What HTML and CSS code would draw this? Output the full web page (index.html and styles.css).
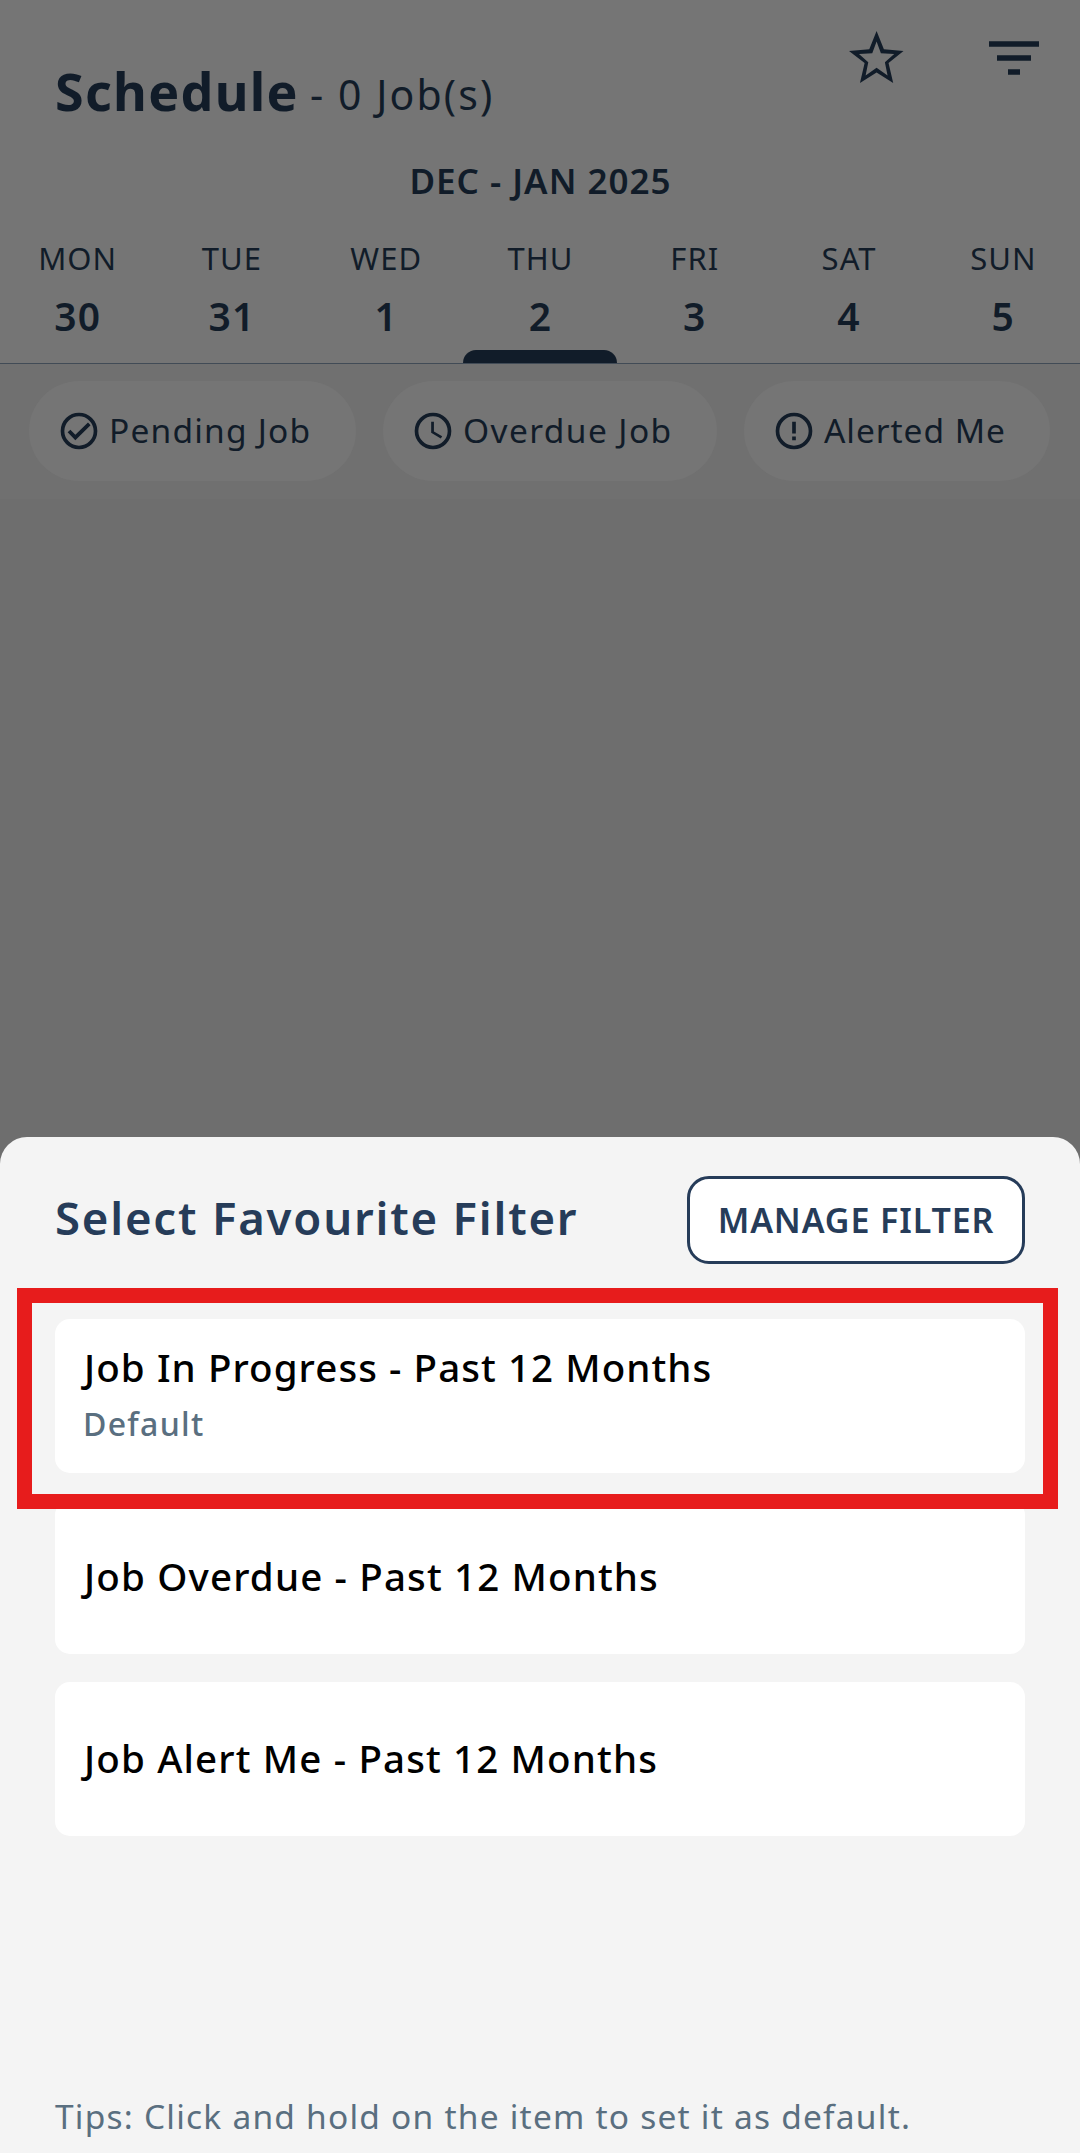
FILE: index.html
```
<!DOCTYPE html>
<html lang="en">
<head>
<meta charset="utf-8">
<title>Schedule</title>
<link rel="stylesheet" href="styles.css">
</head>
<body>
<main class="screen">
  <header class="top">
    <div class="title-row">
      <h1 class="title">Schedule</h1>
      <span class="count">- 0 Job(s)</span>
      <div class="actions">
        <svg class="star" viewBox="27 26 164 156"><path fill-rule="evenodd" d="M110 26 132 81 191 86 146 122 160 182 110 151 60 182 74 122 27 86 88 81ZM110 57 97 93 57 95 85 120 77 160 110 136 143 160 135 120 163 95 123 93Z"/></svg>
        <svg class="filter" viewBox="0 0 50 34"><path d="M0 .3h50v5.4H0zM8 14.3h34v5.4H8zM19 28.3h12v5.4H19z"/></svg>
      </div>
    </div>
    <div class="month">DEC - JAN 2025</div>
    <div class="week">
      <div class="day"><span>MON</span><b>30</b></div>
      <div class="day"><span>TUE</span><b>31</b></div>
      <div class="day"><span>WED</span><b>1</b></div>
      <div class="day selected"><span>THU</span><b>2</b></div>
      <div class="day"><span>FRI</span><b>3</b></div>
      <div class="day"><span>SAT</span><b>4</b></div>
      <div class="day"><span>SUN</span><b>5</b></div>
    </div>
  </header>
  <nav class="chips">
    <div class="chip pending"><svg viewBox="0 0 24 24"><circle cx="12" cy="12" r="9"/><path d="M16.9 7.3 10 14.1l-2.7-2.8-1.5 1.4L10 17l8.3-8.2z"/></svg><span>Pending Job</span></div>
    <div class="chip overdue"><svg viewBox="0 0 24 24"><circle cx="12" cy="12" r="9"/><path d="M12.5 7H11v6l5.25 3.15.75-1.23-4.5-2.67z"/></svg><span>Overdue Job</span></div>
    <div class="chip alerted"><svg viewBox="0 0 24 24"><circle cx="12" cy="12" r="9"/><path d="M11 7h2v6.4h-2zM11 15h2v2h-2z"/></svg><span>Alerted Me</span></div>
  </nav>
  <section class="sheet">
    <div class="sheet-head">
      <h2 class="sheet-title">Select Favourite Filter</h2>
      <button class="manage">MANAGE FILTER</button>
    </div>
    <div class="list">
      <div class="card highlighted"><span class="name">Job In Progress - Past 12 Months</span><span class="default">Default</span></div>
      <div class="card"><span class="name">Job Overdue - Past 12 Months</span></div>
      <div class="card"><span class="name">Job Alert Me - Past 12 Months</span></div>
    </div>
    <p class="tips">Tips: Click and hold on the item to set it as default.</p>
  </section>
</main>
</body>
</html>
```
FILE: styles.css
```
* { box-sizing: border-box; }
body { margin: 0; font-family: "Noto Sans", sans-serif; }
h1, h2, p { margin: 0; }

.screen {
  width: 1080px;
  height: 2153px;
  display: flex;
  flex-direction: column;
  background: #6e6e6e;
  color: #111c29;
  overflow: hidden;
  white-space: nowrap;
}

/* dimmed schedule header */
.top {
  height: 364px;
  flex: none;
  background: #757575;
  border-bottom: 1px solid #414b56;
  display: flex;
  flex-direction: column;
}
.title-row { display: flex; height: 160px; padding: 0 41px 0 55px; }
.title { margin-top: 61px; font-size: 52px; line-height: 60px; font-weight: 700; letter-spacing: 1.3px; }
.count { margin: 64px 0 0 11px; font-size: 41px; line-height: 60px; letter-spacing: 2.1px; }
.actions { display: flex; margin-left: auto; gap: 85.5px; }
.actions svg { fill: #111c29; display: block; }
.star { width: 54.5px; height: 52px; margin-top: 30.5px; }
.filter { width: 50px; height: 34px; margin-top: 41px; }
.month { height: 80px; padding: 1px 0 0 1px; text-align: center; font-size: 35px; line-height: 40px; font-weight: 600; letter-spacing: 1px; }
.week { display: grid; grid-template-columns: repeat(7, 1fr); flex: 1; }
.day { display: flex; flex-direction: column; align-items: center; }
.day span { padding-left: 1px; font-size: 31px; line-height: 37px; letter-spacing: 1px; }
.day b { margin-top: 16px; padding-left: 1px; font-size: 39px; line-height: 46px; font-weight: 600; letter-spacing: 1.2px; }
.selected::after { content: ""; width: 100%; height: 13px; margin-top: auto; background: #111c29; border-radius: 13px 13px 0 0; }

.chips { display: flex; gap: 27px; padding: 17px 29px; height: 135px; flex: none; background: #707070; }
.chip { display: flex; align-items: center; gap: 8px; height: 100px; padding-left: 28px; border-radius: 50px; background: #757575; font-size: 33.5px; line-height: 40px; letter-spacing: 1.2px; }
.chip svg { width: 44px; height: 44px; flex: none; fill: #111c29; }
.chip circle { fill: none; stroke: #111c29; stroke-width: 2; }
.chip span { margin-top: -3px; }
.pending { width: 327px; }
.overdue { width: 334px; }
.overdue span { letter-spacing: 1.4px; }
.alerted { width: 306px; }
.alerted span { letter-spacing: .95px; }

/* bottom sheet */
.sheet {
  margin-top: auto;
  height: 1016px;
  flex: none;
  display: flex;
  flex-direction: column;
  padding: 39px 55px 0;
  background: #f4f4f4;
  border-radius: 27px 27px 0 0;
}
.sheet-head { display: flex; justify-content: space-between; height: 143px; }
.sheet-title { margin-top: 13px; color: #263c59; font-size: 45.5px; line-height: 56px; font-weight: 600; letter-spacing: 1.8px; }
.manage {
  width: 338px;
  height: 88px;
  padding: 0;
  border: 3px solid #263c59;
  border-radius: 22px;
  background: #fff;
  color: #263c59;
  font: 600 34px/40px "Noto Sans", sans-serif;
  letter-spacing: .9px;
}
.list { display: flex; flex-direction: column; gap: 27.3px; }
.card { height: 154px; padding: 0 29px 2px; border-radius: 15px; background: #fff; color: #000; display: flex; flex-direction: column; justify-content: center; }
.name { font-size: 38.5px; line-height: 50px; font-weight: 500; letter-spacing: 1.15px; }
.default { margin: 10px 0 0 -1px; color: #5a6f80; font-size: 32px; line-height: 44px; font-weight: 500; letter-spacing: 1.3px; }
.highlighted { position: relative; justify-content: flex-start; padding-top: 23px; }
.highlighted .name { letter-spacing: 1.08px; }
.highlighted::after { content: ""; position: absolute; inset: -31px -33px -36px -38px; border: 15px solid #e71c1c; }
.tips { margin-top: 260px; color: #5a6f80; font-size: 33.5px; line-height: 40px; letter-spacing: 1.22px; }
```
